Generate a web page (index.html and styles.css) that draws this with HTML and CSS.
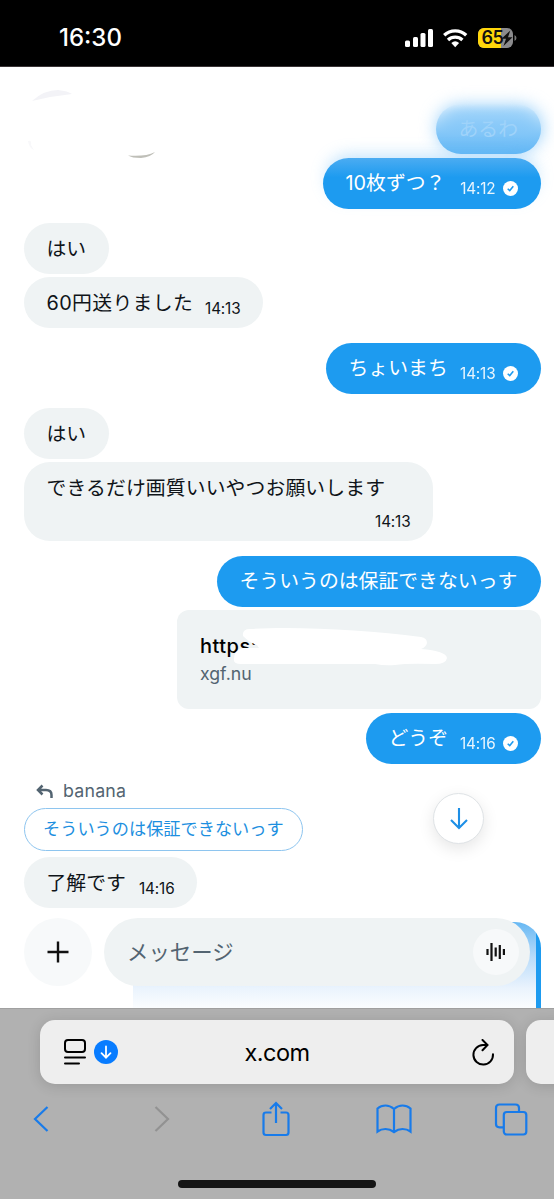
FILE: index.html
```html
<!DOCTYPE html>
<html lang="ja">
<head>
<meta charset="utf-8">
<title>x.com</title>
<link rel="stylesheet" href="styles.css">
</head>
<body>
<div class="phone">
  <header class="status">
    <span class="clock">16:30</span>
    <svg class="status-icons" width="114" height="24" viewBox="0 0 114 24">
      <g fill="#fff">
        <rect x="1" y="15.5" width="5" height="6.5" rx="1.5"/>
        <rect x="9" y="12" width="5" height="10" rx="1.5"/>
        <rect x="16.500" y="8" width="5" height="14" rx="1.500"/>
        <rect x="24" y="4" width="5" height="18" rx="1.500"/>
      </g>
      <g fill="none" stroke="#fff" stroke-width="3.300">
        <path d="M40.200 10.300A15.800 15.800 0 0 1 62.200 10.300"/>
        <path d="M44 15A10.500 10.500 0 0 1 58.400 15"/>
      </g>
      <path d="M47.300 18A6 6 0 0 1 55.100 18L51.200 22.200Z" fill="#fff"/>
      <clipPath id="cell"><rect x="74" y="3" width="35" height="20" rx="6"/></clipPath>
      <g clip-path="url(#cell)"><rect x="74" y="3" width="35" height="20" fill="#8b8b8d"/><rect x="74" y="3" width="23" height="20" fill="#ffd60a"/></g>
      <path d="M110.500 10Q112.500 11 112.500 13T110.500 16Z" fill="#777"/>
      <text x="77.500" y="19.300" class="battery-text">65</text>
      <path d="M106.300 5.500L97.500 13.700H102L99.500 21L108.500 12.300H104Z" fill="#111"/>
    </svg>
  </header>

  <main class="chat">
    <svg class="marks" width="170" height="80" viewBox="0 0 170 80">
      <path d="M32 20Q44 9 58 9Q68 10 72 13Q52 15 32 20Z" fill="#f3f3f7"/>
      <path d="M28 60Q32 59 31 64L34 69Q29 67 28 60Z" fill="#f8f8fa"/>
      <path d="M128 74.500Q145 76 155 71Q151 76 141 77Q132 77 128 74.500Z" fill="#bfbfb8"/>
    </svg>
    <div class="glow"></div>
    <div class="thread">
      <div class="bubble out faded">あるわ</div>
      <div class="bubble out shaded w218"><span>10枚ずつ？</span><time>14:12</time><svg class="seen" viewBox="0 0 16 16"><circle cx="8" cy="8" r="8"/><path d="M5 8.200L7.200 10.200L11 5.500"/></svg></div>
      <div class="bubble in gap14">はい</div>
      <div class="bubble in w239"><span class="loose">60円送りました</span><time>14:13</time></div>
      <div class="bubble out gap15 w215"><span>ちょいまち</span><time>14:13</time><svg class="seen" viewBox="0 0 16 16"><circle cx="8" cy="8" r="8"/><path d="M5 8.200L7.200 10.200L11 5.500"/></svg></div>
      <div class="bubble in gap14">はい</div>
      <div class="bubble in long"><span>できるだけ画質いいやつお願いします</span><time>14:13</time></div>
      <div class="bubble out gap15 w324"><span>そういうのは保証できないっす</span></div>
      <div class="card">
        <b>https:</b>
        <small>xgf.nu</small>
        <svg class="scribble" width="280" height="50" viewBox="0 0 280 50"><path d="M66 24Q65 17 73 17C120 14 190 18 244 25Q250 26 250 31Q249 35 244 37Q269 39 270 46Q269 52 258 52Q230 51 218 53Q208 54 198 52H64Q56 52 57 47Q57 38 66 36L82 36L80 33Q73 31 66 24Z" fill="#fff"/></svg>
      </div>
      <div class="bubble out w175"><span>どうぞ</span><time>14:16</time><svg class="seen" viewBox="0 0 16 16"><circle cx="8" cy="8" r="8"/><path d="M5 8.200L7.200 10.200L11 5.500"/></svg></div>
      <div class="reply-name"><svg width="18" height="16" viewBox="0 0 18 16"><path d="M6.500 1.500L2 6L6.500 10.500M2.500 6H10Q15.500 6 15.500 11V14"/></svg>banana</div>
      <div class="quote">そういうのは保証できないっす</div>
      <div class="bubble in w173"><span>了解です</span><time>14:16</time></div>
      <div class="media"></div>
    </div>
    <button class="jump" aria-label="下へ"><svg width="20" height="24" viewBox="0 0 20 24"><path d="M10 1V21M2 13L10 21L18 13"/></svg></button>
    <div class="composer">
      <button class="plus" aria-label="追加"><svg width="22" height="22" viewBox="0 0 22 22"><path d="M11 .5V21.500M.5 11H21.500"/></svg></button>
      <div class="field"><span>メッセージ</span>
        <div class="voice"><svg width="20" height="20" viewBox="0 0 20 20"><path d="M1.500 7V13M5.500 1V19M9.700 5.500V14.500M13.800 3V17M17.900 7V13"/></svg></div>
      </div>
    </div>
  </main>

  <footer class="browser">
    <div class="tabs">
      <div class="address">
        <div class="address-left">
          <svg width="22" height="26" viewBox="0 0 22 26"><rect x="1" y="1" width="20" height="12" rx="3"/><path d="M1 18.500H21M1 24.500H15" stroke-linecap="round"/></svg>
          <svg width="24" height="24" viewBox="0 0 24 24"><circle cx="12" cy="12" r="12" fill="#087cff" stroke="none"/><path d="M12 6.500V17.500M7.500 13.200L12 17.700L16.500 13.200" stroke="#fff" stroke-width="1.800" stroke-linecap="round"/></svg>
        </div>
        <span>x.com</span>
        <svg width="24" height="27" viewBox="0 0 24 27"><path d="M15.500 6H12A9.800 9.800 0 1 0 22 15.200" stroke-linecap="round"/><path d="M11.500 1L16.500 6L11.500 11.200" stroke-linecap="round"/></svg>
      </div>
      <div class="next-tab"></div>
    </div>
    <nav class="tools">
      <svg width="36" height="28" viewBox="0 0 16 28"><path d="M14.500 2L2 14L14.500 26"/></svg>
      <svg class="off" width="36" height="28" viewBox="0 0 16 28"><path d="M1.500 2L14 14L1.500 26"/></svg>
      <svg width="36" height="36" viewBox="0 0 28 36"><path d="M9.500 11.500H4Q1.500 11.500 1.500 14V31.500Q1.500 34 4 34H24Q26.500 34 26.500 31.500V14Q26.500 11.500 24 11.500H18.500M14 22V2M8 8L14 2L20 8"/></svg>
      <svg width="36" height="30" viewBox="0 0 36 30"><path d="M18 5Q14 1.500 9.500 1.500Q5 1.500 1.500 4.500V27.500Q5 25 9.500 25Q14 25 18 28Q22 25 26.500 25Q31 25 34.500 27.500V4.500Q31 1.500 26.500 1.500Q22 1.500 18 5ZM18 5V28"/></svg>
      <svg width="36" height="33" viewBox="0 0 33 33"><rect x="9.300" y="9" width="22.500" height="22.500" rx="3"/><path d="M9 24.300H5Q1.500 24.300 1.500 21V5Q1.500 1.500 5 1.500H21Q24.500 1.500 24.500 5V8.500"/></svg>
    </nav>
    <div class="home"></div>
  </footer>
</div>
</body>
</html>
```
FILE: styles.css
```css
* { box-sizing: border-box; }
body { margin: 0; }
button { border: 0; padding: 0; }
.phone {
  width: 554px; height: 1199px; overflow: hidden;
  display: flex; flex-direction: column;
  font-family: Inter, "Noto Sans CJK JP", sans-serif;
  color: #0f1419; background: #fff;
}
.status {
  height: 67px; flex: none; background: #000; border-bottom: 1px solid #3a3436;
  display: flex; justify-content: space-between; align-items: flex-start;
  padding: 22px 36px 0 59px; color: #fff;
}
.clock { font-size: 24px; font-weight: 500; line-height: 32px; letter-spacing: 0; }
.status-icons { margin-top: 3px; }
.battery-text { font: 600 18px Inter, sans-serif; fill: #111; letter-spacing: -.6px; }

.chat { position: relative; height: 941px; flex: none; overflow: hidden; }
.marks { position: absolute; left: 0; top: 14px; }
.glow {
  position: absolute; left: 438px; top: 40px; width: 103px; height: 42px;
  border-radius: 24px; background: #86c8f9; filter: blur(9px);
}
.thread {
  position: relative; display: flex; flex-direction: column; align-items: flex-end;
  padding: 37.4px 13px 0 24px; gap: 3.4px;
}
.bubble {
  height: 51px; flex: none; border-radius: 26px; padding: 0 22.5px;
  display: flex; align-items: center; justify-content: space-between;
  font-size: 19.85px; line-height: 30px; white-space: nowrap;
}
.out { background: #1d9bf0; color: #fff; }
.in { background: #eff3f4; align-self: flex-start; padding-top: 1px; }
.bubble time { font-size: 15.3px; line-height: 20px; letter-spacing: -.15px; margin-top: 12px; }
.out time { margin-left: auto; margin-right: 7px; opacity: .9; }
.bubble.out:has(time) { padding-right: 23.5px; }
.loose { letter-spacing: .35px; }
.seen { width: 15px; height: 15px; margin-top: 11px; flex: none; fill: #fff; }
.seen path { fill: none; stroke: #1d9bf0; stroke-width: 1.6; }
.faded {
  width: 105px; height: 50px; color: #9fd3fa;
  background: linear-gradient(rgba(160,211,250,0), rgba(150,207,249,.6) 28%, #82c6f8 60%, #62b7f5);
}
.shaded {
  background: linear-gradient(#4bacf2, #1d9bf0 38%);
  box-shadow: 0 -7px 16px -4px rgba(100,185,247,.4);
}
.gap14 { margin-top: 10.7px; }
.gap15 { margin-top: 11.2px; }
.w218 { width: 218px; }
.w239 { width: 239px; }
.w215 { width: 215px; }
.w324 { width: 324px; }
.w175 { width: 175px; }
.w173 { width: 173px; }
.long {
  width: 409px; height: 79px; flex-direction: column; align-items: flex-start;
  padding-top: 11px; padding-bottom: 9px; letter-spacing: .1px;
}
.bubble.long time { align-self: flex-end; margin: 0; }
.card {
  position: relative; width: 364px; height: 99px; flex: none; border-radius: 12px;
  background: #eff3f4; padding: 22px 23px; display: flex; flex-direction: column;
}
.card b { font-size: 20px; font-weight: 500; line-height: 28px; letter-spacing: .5px; color: #000; }
.card small { font-size: 17.7px; line-height: 27px; color: #536471; }
.scribble { position: absolute; left: 0; top: 2px; overflow: visible; }
.reply-name {
  align-self: flex-start; height: 27px; margin: 10px 0 0 12px;
  display: flex; align-items: center; gap: 9px;
  font-size: 17.8px; letter-spacing: .2px; color: #536471;
}
.reply-name svg { fill: none; stroke: #536471; stroke-width: 2.5; margin-top: 3px; }
.quote {
  align-self: flex-start; width: 279px; height: 43px; flex: none;
  border: 1.3px solid #8ec5ef; border-radius: 22px;
  padding-left: 18px; font-size: 17.2px; line-height: 39px; color: #1d8fe0;
  white-space: nowrap; margin: .6px 0 2.4px;
}
.media {
  width: 408px; height: 120px; flex: none; margin-top: 10.8px;
  border-radius: 0 26px 0 0;
  background:
    linear-gradient(#1d9bf0, #1d9bf0) right / 5.5px 100% no-repeat,
    linear-gradient(#67b8f3, #b9dcfa 35px, #eaf3fd 66px, #fbfdff 86px);
}
.jump {
  position: absolute; left: 433px; top: 726px; width: 51px; height: 51px;
  border: 1px solid #dfe3e6; border-radius: 50%; background: #fff;
  box-shadow: 0 5px 16px rgba(0,0,0,.1);
  display: grid; place-items: center;
}
.jump svg { fill: none; stroke: #1d8fe6; stroke-width: 2.1; }
.composer {
  position: absolute; left: 24px; top: 851px; width: 506px; height: 68px;
  display: flex; gap: 12px;
}
.plus {
  width: 68px; height: 68px; flex: none; border-radius: 50%; background: #f7f9fa;
  display: grid; place-items: center;
}
.plus svg { fill: none; stroke: #111; stroke-width: 2.4; }
.field {
  flex: 1; border-radius: 34px; background: #eff3f4; padding: 0 11px 0 23px;
  display: flex; align-items: center; justify-content: space-between;
  font-size: 21.4px; color: #536471;
}
.field span { padding-bottom: 4px; }
.voice {
  width: 46px; height: 46px; border-radius: 50%; background: #f7f9fa;
  display: grid; place-items: center;
}
.voice svg { fill: none; stroke: #111; stroke-width: 2.2; }

.browser {
  flex: 1; background: #b1b1b1; border-top: 1px solid #a0a0a0;
  display: flex; flex-direction: column; overflow: hidden;
}
.tabs { display: flex; gap: 12px; padding: 11px 0 0 40px; flex: none; }
.address {
  width: 474px; height: 64px; flex: none; border-radius: 15px; background: #eee;
  box-shadow: 0 2px 14px rgba(0,0,0,.14);
  display: grid; grid-template-columns: 1fr auto 1fr; align-items: center;
  padding: 0 19px 0 24px; font-size: 23.5px; color: #000; letter-spacing: -.5px;
}
.address span { margin-right: 5px; }
.address svg { fill: none; stroke: #000; stroke-width: 2; justify-self: end; }
.address-left { display: flex; align-items: center; gap: 8px; }
.next-tab {
  width: 60px; height: 64px; flex: none; border-radius: 15px; background: #eee;
  box-shadow: 0 2px 14px rgba(0,0,0,.14);
}
.tools {
  display: flex; align-items: center; justify-content: space-between;
  height: 70px; flex: none; padding: 0 25px 0 23px;
}
.tools svg { fill: none; stroke: #187bea; stroke-width: 2.2; }
.tools .off { stroke: #929292; transform: translateX(3px); }
.home { width: 198px; height: 8px; border-radius: 4px; background: #151515; margin: 26px auto 0; }
```
